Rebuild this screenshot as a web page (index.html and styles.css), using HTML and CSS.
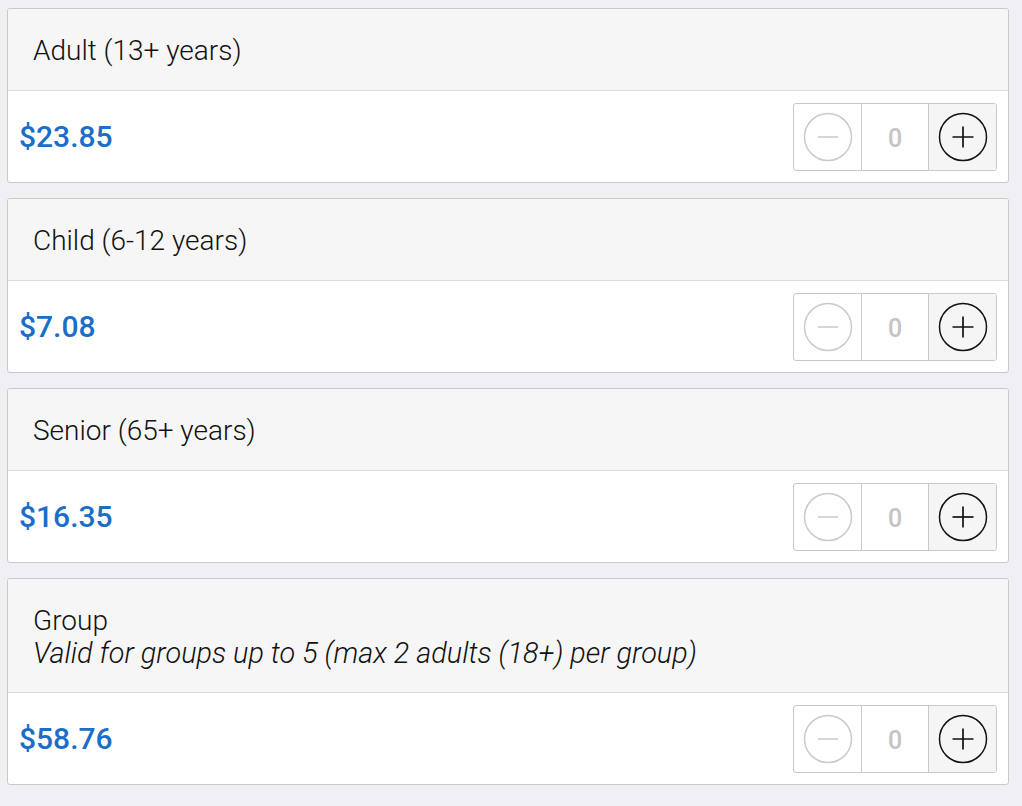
FILE: index.html
```html
<!DOCTYPE html>
<html>
<head>
<meta charset="utf-8">
<link rel="stylesheet" href="styles.css">
</head>
<body>
<div class="list">
  <div class="card">
    <div class="card-header"><div class="title">Adult (13+ years)</div></div>
    <div class="card-body">
      <div class="price">$23.85</div>
      <div class="stepper">
        <div class="seg minus"><svg width="50" height="50" viewBox="0 0 50 50"><circle cx="25" cy="25" r="23.5" fill="none" stroke="#cacaca" stroke-width="1.5"/><line x1="15" y1="25" x2="35" y2="25" stroke="#cacaca" stroke-width="1.5"/></svg></div>
        <div class="seg count">0</div>
        <div class="seg plus"><svg width="50" height="50" viewBox="0 0 50 50"><circle cx="25" cy="25" r="23.5" fill="none" stroke="#111" stroke-width="1.5"/><line x1="14.5" y1="25" x2="35.5" y2="25" stroke="#111" stroke-width="1.7"/><line x1="25" y1="14.5" x2="25" y2="35.5" stroke="#111" stroke-width="1.7"/></svg></div>
      </div>
    </div>
  </div>
  <div class="card">
    <div class="card-header"><div class="title">Child (6-12 years)</div></div>
    <div class="card-body">
      <div class="price">$7.08</div>
      <div class="stepper">
        <div class="seg minus"><svg width="50" height="50" viewBox="0 0 50 50"><circle cx="25" cy="25" r="23.5" fill="none" stroke="#cacaca" stroke-width="1.5"/><line x1="15" y1="25" x2="35" y2="25" stroke="#cacaca" stroke-width="1.5"/></svg></div>
        <div class="seg count">0</div>
        <div class="seg plus"><svg width="50" height="50" viewBox="0 0 50 50"><circle cx="25" cy="25" r="23.5" fill="none" stroke="#111" stroke-width="1.5"/><line x1="14.5" y1="25" x2="35.5" y2="25" stroke="#111" stroke-width="1.7"/><line x1="25" y1="14.5" x2="25" y2="35.5" stroke="#111" stroke-width="1.7"/></svg></div>
      </div>
    </div>
  </div>
  <div class="card">
    <div class="card-header"><div class="title">Senior (65+ years)</div></div>
    <div class="card-body">
      <div class="price">$16.35</div>
      <div class="stepper">
        <div class="seg minus"><svg width="50" height="50" viewBox="0 0 50 50"><circle cx="25" cy="25" r="23.5" fill="none" stroke="#cacaca" stroke-width="1.5"/><line x1="15" y1="25" x2="35" y2="25" stroke="#cacaca" stroke-width="1.5"/></svg></div>
        <div class="seg count">0</div>
        <div class="seg plus"><svg width="50" height="50" viewBox="0 0 50 50"><circle cx="25" cy="25" r="23.5" fill="none" stroke="#111" stroke-width="1.5"/><line x1="14.5" y1="25" x2="35.5" y2="25" stroke="#111" stroke-width="1.7"/><line x1="25" y1="14.5" x2="25" y2="35.5" stroke="#111" stroke-width="1.7"/></svg></div>
      </div>
    </div>
  </div>
  <div class="card">
    <div class="card-header tall">
      <div class="title">Group</div>
      <div class="subtitle">Valid for groups up to 5 (max 2 adults (18+) per group)</div>
    </div>
    <div class="card-body">
      <div class="price">$58.76</div>
      <div class="stepper">
        <div class="seg minus"><svg width="50" height="50" viewBox="0 0 50 50"><circle cx="25" cy="25" r="23.5" fill="none" stroke="#cacaca" stroke-width="1.5"/><line x1="15" y1="25" x2="35" y2="25" stroke="#cacaca" stroke-width="1.5"/></svg></div>
        <div class="seg count">0</div>
        <div class="seg plus"><svg width="50" height="50" viewBox="0 0 50 50"><circle cx="25" cy="25" r="23.5" fill="none" stroke="#111" stroke-width="1.5"/><line x1="14.5" y1="25" x2="35.5" y2="25" stroke="#111" stroke-width="1.7"/><line x1="25" y1="14.5" x2="25" y2="35.5" stroke="#111" stroke-width="1.7"/></svg></div>
      </div>
    </div>
  </div>
</div>
</body>
</html>
```

FILE: styles.css
```css
html, body {
  margin: 0;
  padding: 0;
  background: #efeff4;
  font-family: Roboto, "Noto Sans", sans-serif;
}
.list {
  padding: 8px 13px 0 7px;
}
.card {
  background: #fff;
  border: 1px solid #c9c9c9;
  border-radius: 3px;
  margin-bottom: 15px;
  overflow: hidden;
}
.card-header {
  height: 82px;
  box-sizing: border-box;
  background: #f6f6f7;
  border-bottom: 1px solid #dcdcdc;
  padding: 2px 25px 0;
  display: flex;
  flex-direction: column;
  justify-content: center;
}
.card-header.tall {
  height: 114px;
}
.title {
  font-size: 28px;
  font-weight: 300;
  color: #111;
  line-height: 32px;
}
.subtitle {
  font-size: 28.8px;
  font-weight: 300;
  font-style: italic;
  color: #111;
  line-height: 32px;
}
.card-body {
  height: 91px;
  padding: 0 11px 0 11px;
  display: flex;
  align-items: center;
  justify-content: space-between;
}
.price {
  font-size: 30px;
  font-weight: 500;
  color: #1a6dc8;
}
.stepper {
  display: flex;
  border: 1px solid #c9c9c9;
  border-radius: 3px;
  height: 66px;
  overflow: hidden;
}
.seg {
  width: 67px;
  display: flex;
  align-items: center;
  justify-content: center;
}
.seg + .seg {
  border-left: 1px solid #c9c9c9;
}
.seg svg {
  display: block;
}
.count {
  font-size: 25px;
  font-weight: 500;
  color: #c4c4c4;
  padding-top: 4px;
  box-sizing: border-box;
}
.plus {
  background: #f5f5f5;
}
```
